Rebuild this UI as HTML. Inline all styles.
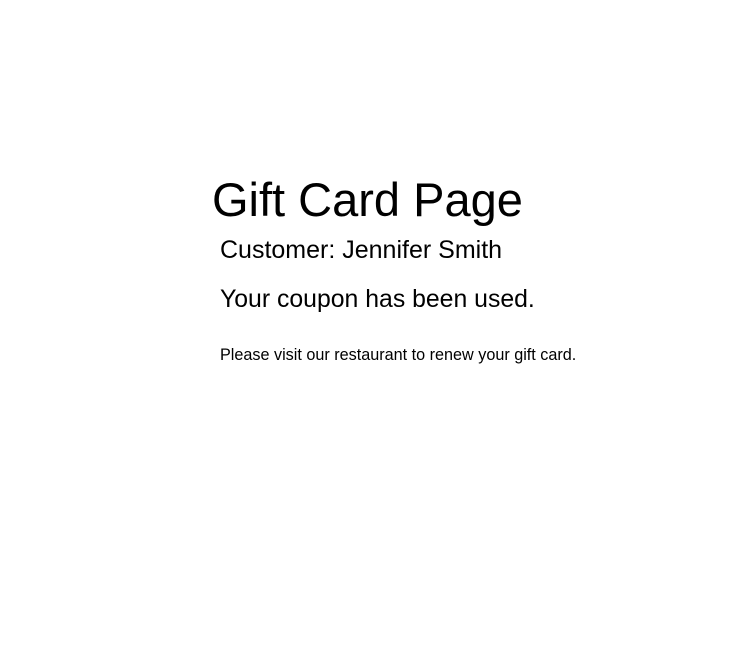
<!DOCTYPE html>
<html><head><meta charset="utf-8"><style>
html,body{margin:0;padding:0;background:#fff;width:744px;height:658px;overflow:hidden}
body{position:relative;font-family:"Liberation Sans",sans-serif;color:#000}
div{position:absolute;line-height:1;white-space:nowrap}
</style></head><body>
<div style="left:212px;top:176px;font-size:47px">Gift Card Page</div>
<div style="left:220px;top:238px;font-size:25px">Customer: Jennifer Smith</div>
<div style="left:220px;top:288px;font-size:24.8px">Your coupon has been used.</div>
<div style="left:220px;top:347px;font-size:16.2px">Please visit our restaurant to renew your gift card.</div>
</body></html>
